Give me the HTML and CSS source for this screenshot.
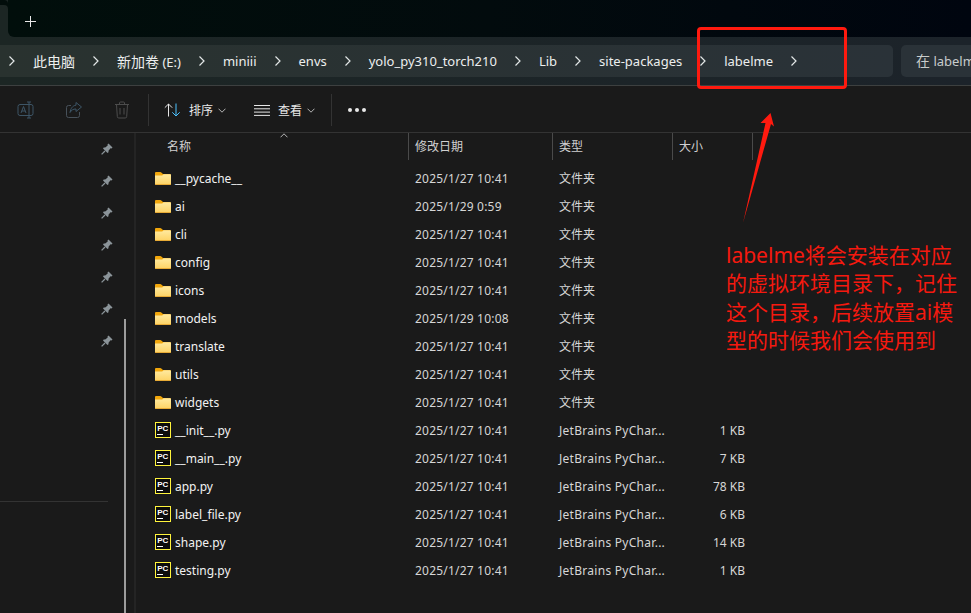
FILE: index.html
```html
<!DOCTYPE html>
<html lang="zh-CN">
<head>
    <meta charset="UTF-8">
    <title>labelme - 文件资源管理器</title>
    <link rel="stylesheet" href="styles.css">
</head>
<body>
    <svg class="defs" width="0" height="0">
        <defs>
            <linearGradient id="folderFill" x1="0" y1="0" x2="0" y2="1">
                <stop offset="0" stop-color="#ffeaa0"/>
                <stop offset="1" stop-color="#fdd263"/>
            </linearGradient>
            <symbol id="folder" viewBox="0 0 16 13">
                <path d="M0 1.2C0 .5.5 0 1.2 0h4c.5 0 .8.2 1.1.5L8 2h6.800c.7 0 1.200.5 1.200 1.200V5H0z" fill="#f2a70c"/>
                <path d="M0 3.400h7.200L8.600 2.300h6.200c.7 0 1.200.5 1.200 1.200v8.300c0 .7-.5 1.200-1.200 1.200H1.200C.5 13 0 12.500 0 11.800z" fill="url(#folderFill)"/>
                <rect y="12" width="16" height="1" rx=".5" fill="#e8ab36"/>
            </symbol>
            <symbol id="pc" viewBox="0 0 16 16">
                <rect x=".5" y=".5" width="15" height="15" fill="#0c0c0c" stroke="#fff43c"/>
                <text x="2.200" y="8.800" class="pc-text">PC</text>
                <rect x="2" y="12" width="6" height="1" fill="#fff"/>
            </symbol>
            <symbol id="pin" viewBox="0 0 12 12">
                <path d="M7.500.5l4 4-1 1-1-.2-2 2.500v1.500l-1 .7L2 5.500l.7-1h1.500l2.500-2-.2-1z" fill="#8b9499"/>
                <path d="M4 8L.6 11.400" stroke="#8b9499" stroke-width="1.300" fill="none"/>
            </symbol>
            <symbol id="chev" viewBox="0 0 8 12">
                <path d="M1.500 1.500L6 6l-4.500 4.500" fill="none" stroke="#e4e8e8" stroke-width="1.200"/>
            </symbol>
            <symbol id="caret" viewBox="0 0 8 5">
                <path d="M.5.700L4 4.200 7.500.700" fill="none" stroke="#b5b5b5"/>
            </symbol>
        </defs>
    </svg>

    <div class="window">
        <div class="title-bar">
            <div class="tab-edge"></div>
            <div class="tab-strip">
                <svg class="plus" width="11" height="11" viewBox="0 0 11 11"><path d="M5.500 0v11M0 5.500h11" stroke="#e8e8e8"/></svg>
            </div>
        </div>

        <div class="nav-bar">
            <div class="breadcrumb">
                <svg class="chev"><use href="#chev"/></svg>
                <span class="crumb"><span class="cn">此电脑</span></span>
                <svg class="chev"><use href="#chev"/></svg>
                <span class="crumb"><span class="cn">新加卷</span> (E:)</span>
                <svg class="chev"><use href="#chev"/></svg>
                <span class="crumb">miniii</span>
                <svg class="chev"><use href="#chev"/></svg>
                <span class="crumb">envs</span>
                <svg class="chev"><use href="#chev"/></svg>
                <span class="crumb">yolo_py310_torch210</span>
                <svg class="chev"><use href="#chev"/></svg>
                <span class="crumb">Lib</span>
                <svg class="chev"><use href="#chev"/></svg>
                <span class="crumb">site-packages</span>
                <svg class="chev"><use href="#chev"/></svg>
                <span class="crumb">labelme</span>
                <svg class="chev"><use href="#chev"/></svg>
            </div>
            <div class="search"><span class="cn">在</span> labelme 中搜索</div>
        </div>

        <div class="toolbar">
            <button class="tool-icon">
                <svg width="18" height="18" viewBox="0 0 18 18" fill="none" stroke="#3d5566"><rect x="1" y="3.500" width="15" height="11" rx="2"/><path d="M4 12l2.500-6.500L9 12M4.800 10h3.400M12 1v16M10 1h4M10 17h4"/></svg>
            </button>
            <button class="tool-icon">
                <svg width="18" height="18" viewBox="0 0 18 18" fill="none" stroke="#47515a"><path d="M14.500 11v3.500a2 2 0 0 1-2 2h-9a2 2 0 0 1-2-2v-8a2 2 0 0 1 2-2H6"/><path d="M11 1.500l5.500 4.500-5.500 4.500V8c-3 0-4.500 1-6 3.500C5.500 8 7.500 4.500 11 4.200z" stroke="#3d5566"/></svg>
            </button>
            <button class="tool-icon">
                <svg width="16" height="18" viewBox="0 0 16 18" fill="none" stroke="#4c4c4c"><path d="M1 3.500h14M5.500 3.500V2a1 1 0 0 1 1-1h3a1 1 0 0 1 1 1v1.500M2.500 3.500l.8 12a1.500 1.500 0 0 0 1.500 1.500h6.400a1.500 1.500 0 0 0 1.500-1.500l.8-12M6 7v6.500M10 7v6.500"/></svg>
            </button>
            <span class="tool-sep"></span>
            <button class="tool-menu sort-menu">
                <svg width="17" height="14" viewBox="0 0 17 14" fill="none"><path d="M4.500 13.500V1M.8 4.700L4.500 1l3.700 3.700" stroke="#e6e6e6"/><path d="M12 .5V13M8.300 9.300L12 13l3.700-3.700" stroke="#4cc2ff"/></svg>
                <span>排序</span>
                <svg class="menu-caret"><use href="#caret"/></svg>
            </button>
            <button class="tool-menu view-menu">
                <svg width="16" height="11" viewBox="0 0 16 11" fill="none" stroke="#e6e6e6"><path d="M0 .5h16M0 3.800h16M0 7.100h16M0 10.400h16"/></svg>
                <span>查看</span>
                <svg class="menu-caret"><use href="#caret"/></svg>
            </button>
            <span class="tool-sep sep-right"></span>
            <span class="more"><i></i><i></i><i></i></span>
        </div>

        <div class="content">
            <aside class="sidebar">
                <ul class="pins">
                    <li><svg class="pin"><use href="#pin"/></svg></li>
                    <li><svg class="pin"><use href="#pin"/></svg></li>
                    <li><svg class="pin"><use href="#pin"/></svg></li>
                    <li><svg class="pin"><use href="#pin"/></svg></li>
                    <li><svg class="pin"><use href="#pin"/></svg></li>
                    <li><svg class="pin"><use href="#pin"/></svg></li>
                    <li><svg class="pin"><use href="#pin"/></svg></li>
                </ul>
                <div class="side-line"></div>
                <div class="side-scroll"></div>
            </aside>

            <main class="files">
                <div class="cols head">
                    <div class="head-cell name-head">名称<svg class="sort-caret" viewBox="0 0 8 5"><path d="M.5 4.300L4 .8l3.500 3.500" fill="none" stroke="#b5b5b5"/></svg></div>
                    <div class="head-cell">修改日期</div>
                    <div class="head-cell">类型</div>
                    <div class="head-cell last">大小</div>
                </div>

                <div class="cols row"><div class="name"><svg class="ico-folder"><use href="#folder"/></svg>__pycache__</div><div class="date">2025/1/27 10:41</div><div>文件夹</div><div class="size"></div></div>
                <div class="cols row"><div class="name"><svg class="ico-folder"><use href="#folder"/></svg>ai</div><div class="date">2025/1/29 0:59</div><div>文件夹</div><div class="size"></div></div>
                <div class="cols row"><div class="name"><svg class="ico-folder"><use href="#folder"/></svg>cli</div><div class="date">2025/1/27 10:41</div><div>文件夹</div><div class="size"></div></div>
                <div class="cols row"><div class="name"><svg class="ico-folder"><use href="#folder"/></svg>config</div><div class="date">2025/1/27 10:41</div><div>文件夹</div><div class="size"></div></div>
                <div class="cols row"><div class="name"><svg class="ico-folder"><use href="#folder"/></svg>icons</div><div class="date">2025/1/27 10:41</div><div>文件夹</div><div class="size"></div></div>
                <div class="cols row"><div class="name"><svg class="ico-folder"><use href="#folder"/></svg>models</div><div class="date">2025/1/29 10:08</div><div>文件夹</div><div class="size"></div></div>
                <div class="cols row"><div class="name"><svg class="ico-folder"><use href="#folder"/></svg>translate</div><div class="date">2025/1/27 10:41</div><div>文件夹</div><div class="size"></div></div>
                <div class="cols row"><div class="name"><svg class="ico-folder"><use href="#folder"/></svg>utils</div><div class="date">2025/1/27 10:41</div><div>文件夹</div><div class="size"></div></div>
                <div class="cols row"><div class="name"><svg class="ico-folder"><use href="#folder"/></svg>widgets</div><div class="date">2025/1/27 10:41</div><div>文件夹</div><div class="size"></div></div>
                <div class="cols row"><div class="name"><svg class="ico-pc"><use href="#pc"/></svg>__init__.py</div><div class="date">2025/1/27 10:41</div><div class="type">JetBrains PyChar...</div><div class="size">1 KB</div></div>
                <div class="cols row"><div class="name"><svg class="ico-pc"><use href="#pc"/></svg>__main__.py</div><div class="date">2025/1/27 10:41</div><div class="type">JetBrains PyChar...</div><div class="size">7 KB</div></div>
                <div class="cols row"><div class="name"><svg class="ico-pc"><use href="#pc"/></svg>app.py</div><div class="date">2025/1/27 10:41</div><div class="type">JetBrains PyChar...</div><div class="size">78 KB</div></div>
                <div class="cols row"><div class="name"><svg class="ico-pc"><use href="#pc"/></svg>label_file.py</div><div class="date">2025/1/27 10:41</div><div class="type">JetBrains PyChar...</div><div class="size">6 KB</div></div>
                <div class="cols row"><div class="name"><svg class="ico-pc"><use href="#pc"/></svg>shape.py</div><div class="date">2025/1/27 10:41</div><div class="type">JetBrains PyChar...</div><div class="size">14 KB</div></div>
                <div class="cols row"><div class="name"><svg class="ico-pc"><use href="#pc"/></svg>testing.py</div><div class="date">2025/1/27 10:41</div><div class="type">JetBrains PyChar...</div><div class="size">1 KB</div></div>
            </main>
        </div>

        <!-- red annotations drawn on top of the screenshot -->
        <div class="mark-box"></div>
        <svg class="mark-arrow" width="40" height="115" viewBox="0 0 40 115">
            <path d="M30.500 1L34 14.500 31 12 3 111 25.500 11 20.500 11z" fill="#ff1a0f"/>
        </svg>
        <p class="mark-note">labelme将会安装在对应<br>的虚拟环境目录下，记住<br>这个目录，后续放置ai模<br>型的时候我们会使用到</p>
    </div>
</body>
</html>
```

FILE: styles.css
```css
* {
    box-sizing: border-box;
}

body {
    margin: 0;
    background: #1a1a1a;
    color: #e8e8e8;
    font-family: "Noto Sans", "Noto Sans CJK SC", sans-serif;
    font-size: 12px;
}

ul {
    list-style: none;
    margin: 0;
    padding: 0;
}

button {
    background: none;
    border: none;
    padding: 0;
    color: inherit;
    font: inherit;
}

.defs {
    position: absolute;
}

.pc-text {
    font-family: "Liberation Sans", sans-serif;
    font-size: 8px;
    font-weight: bold;
    fill: #fff;
}

.window {
    position: relative;
    width: 971px;
    height: 613px;
    overflow: hidden;
    display: flex;
    flex-direction: column;
}

.cn {
    font-size: 14px;
}

/* Title bar with tabs */
.title-bar {
    display: flex;
    height: 37px;
    background: linear-gradient(90deg, #1c2624, #1c232a);
}

.tab-edge {
    width: 8px;
    margin-top: 5px;
    background: #1c2624;
    border-top-right-radius: 4px;
    box-shadow: 0 -5px 0 #020d0b;
}

.tab-strip {
    flex: 1;
    display: flex;
    align-items: center;
    padding-left: 17px;
    padding-top: 5px;
    background: linear-gradient(90deg, #010e0b, #020b0d 50%, #00050f);
    border-bottom-left-radius: 6px;
}

/* Address bar */
.nav-bar {
    display: flex;
    gap: 8px;
    height: 49px;
    padding: 8px 0;
    background: linear-gradient(90deg, #1c2624, #1c232a);
    border-bottom: 1px solid #3d4040;
}

.breadcrumb {
    width: 893px;
    display: flex;
    align-items: center;
    gap: 17px;
    padding-left: 8px;
    background: linear-gradient(90deg, #29322f, #2a3238);
    border-radius: 0 5px 5px 0;
    font-size: 13px;
    color: #eceeee;
}

.chev {
    width: 8px;
    height: 12px;
    flex-shrink: 0;
}

.crumb {
    white-space: nowrap;
}

.search {
    flex: 1;
    padding-left: 15px;
    background: #2a3238;
    border-radius: 5px 0 0 5px;
    font-size: 13px;
    line-height: 32px;
    color: #c8cccc;
    white-space: nowrap;
    overflow: hidden;
}

/* Command toolbar */
.toolbar {
    display: flex;
    align-items: center;
    height: 47px;
    padding-left: 17px;
    padding-top: 2px;
    border-bottom: 1px solid #333;
    background: #1a1a1a;
}

.tool-icon {
    display: flex;
    justify-content: center;
    width: 18px;
    margin-right: 30px;
}

.tool-sep {
    width: 1px;
    height: 32px;
    margin-left: -13px;
    background: #333;
}

.tool-menu {
    display: flex;
    align-items: center;
}

.tool-menu span {
    margin-left: 8px;
}

.sort-menu {
    margin-left: 15px;
}

.view-menu {
    margin-left: 28px;
}

.menu-caret {
    width: 8px;
    height: 5px;
    margin-left: 5px;
}

.sep-right {
    margin-left: 16px;
}

.more {
    display: flex;
    gap: 3px;
    margin-left: 16px;
}

.more i {
    width: 4px;
    height: 4px;
    border-radius: 50%;
    background: #e8e8e8;
}

/* Main area */
.content {
    flex: 1;
    display: flex;
}

.sidebar {
    position: relative;
    width: 136px;
    flex-shrink: 0;
    border-right: 2px solid #242424;
}

.pins li {
    display: flex;
    justify-content: flex-end;
    align-items: center;
    height: 32px;
    padding-right: 21px;
}

.pin {
    width: 12px;
    height: 12px;
}

.side-line {
    margin-top: 144px;
    width: 108px;
    height: 1px;
    background: #333;
}

.side-scroll {
    position: absolute;
    left: 124px;
    top: 186px;
    bottom: 0;
    width: 2px;
    background: #9c9c9c;
}

.files {
    flex: 1;
}

.cols {
    display: grid;
    grid-template-columns: 273px 144px 120px 80px;
}

.head {
    height: 31px;
    color: #d0d0d0;
}

.head-cell {
    height: 27px;
    margin-left: -1px;
    padding-left: 6px;
    line-height: 27px;
    border-left: 1px solid #4a4a4a;
}

.head-cell.last {
    border-right: 1px solid #4a4a4a;
}

.name-head {
    position: relative;
    margin-left: 0;
    padding-left: 31px;
    border-left: none;
}

.sort-caret {
    position: absolute;
    left: 144px;
    top: 0;
    width: 8px;
    height: 5px;
}

.row {
    height: 28px;
    align-items: center;
    color: #d6d6d6;
    white-space: nowrap;
}

.row > div {
    padding-left: 6px;
}

.row > .name {
    display: flex;
    align-items: center;
    padding-left: 19px;
    color: #f2f2f2;
}

.date {
    letter-spacing: .2px;
}

.type {
    letter-spacing: .28px;
}

.ico-folder {
    width: 16px;
    height: 13px;
    margin-right: 4px;
}

.ico-pc {
    width: 16px;
    height: 16px;
    margin-right: 4px;
}

.row > .size {
    padding-right: 8px;
    text-align: right;
}

/* Red annotations */
.mark-box {
    position: absolute;
    left: 697px;
    top: 27px;
    width: 150px;
    height: 62px;
    border: 3px solid #ff1a0f;
    border-radius: 4px;
}

.mark-arrow {
    position: absolute;
    left: 740px;
    top: 112px;
}

.mark-note {
    position: absolute;
    left: 726px;
    top: 241px;
    margin: 0;
    font-size: 21px;
    line-height: 28.3px;
    color: #f5190f;
    white-space: nowrap;
}
```
